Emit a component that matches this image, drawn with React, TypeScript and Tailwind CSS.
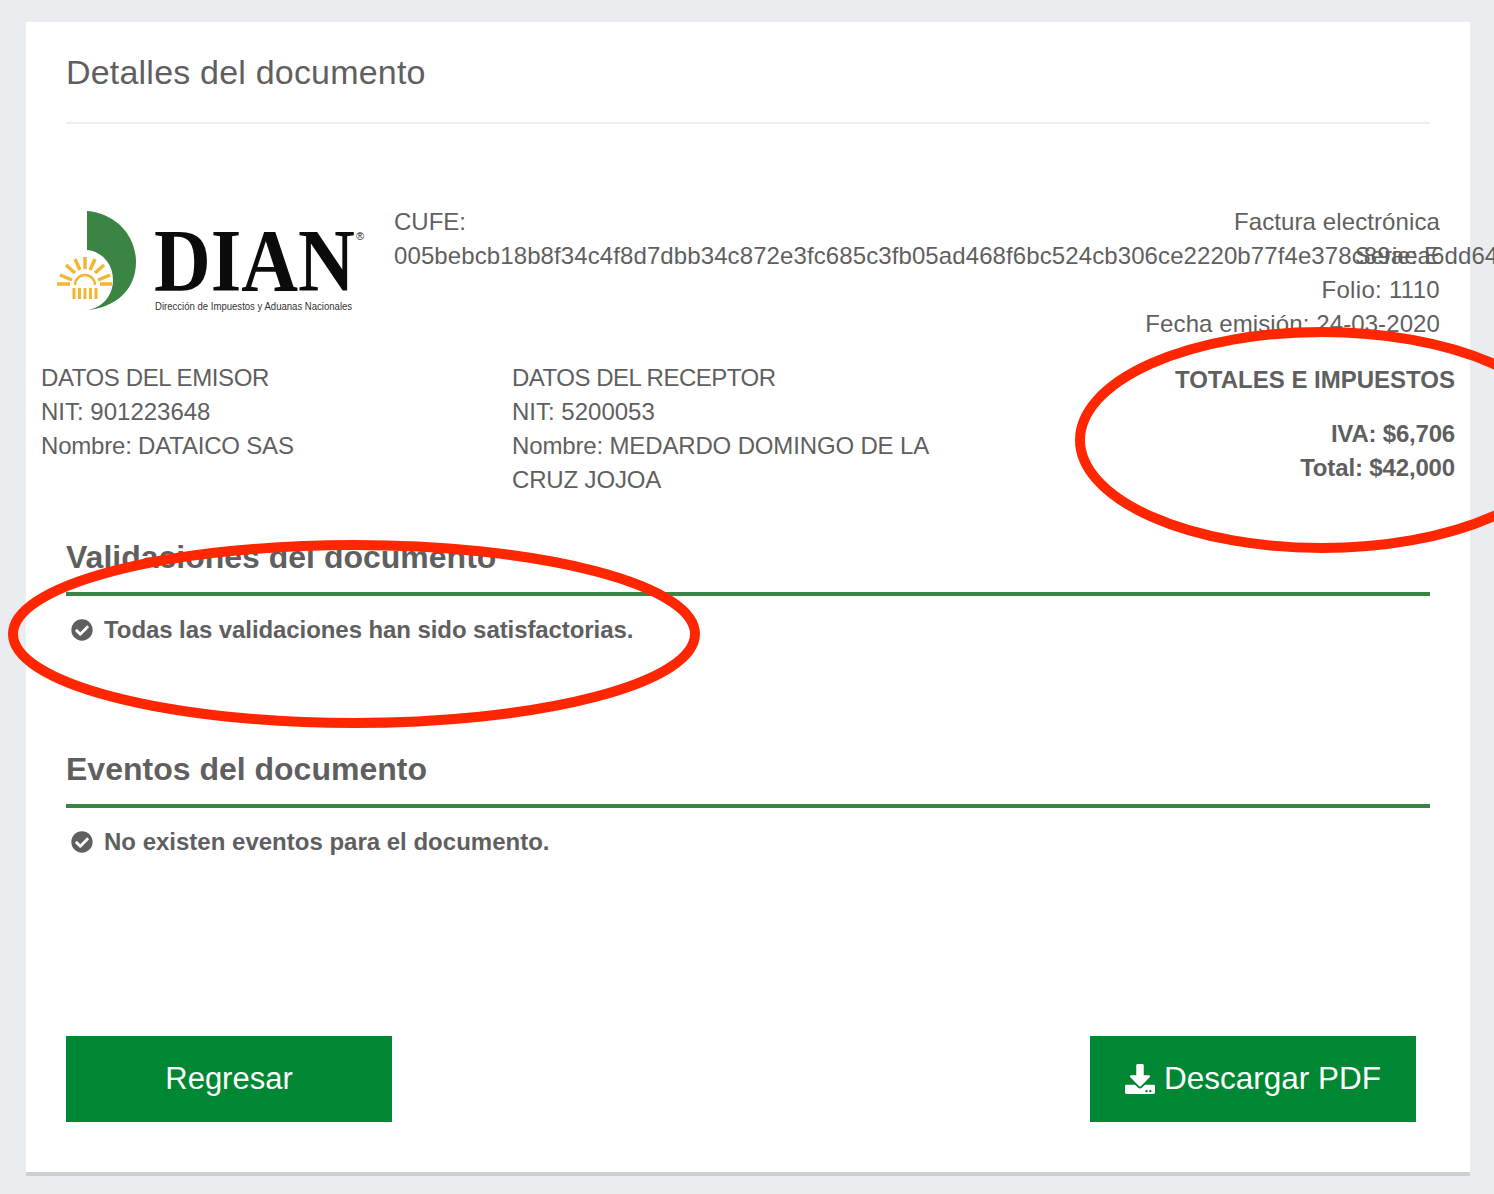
import React from 'react';
import { FaCheckCircle, FaDownload } from 'react-icons/fa';

function DianLogo() {
  return (
    <svg width="320" height="115" viewBox="50 205 320 115" className="shrink-0 -mt-[1px]">
      <path d="M87 211C115 213 136 235 136 262C136 290 115 308 87 310C103 308 113 295 113 280C113 262 100 251 87 250Z" fill="#3a8544" />
      <g stroke="#f2b632" strokeWidth="3.5" fill="none">
        <path d="M57 284H70M100 284H112" />
        <path d="M60 275L72 280M110 275L98 280M66 265L75 273M104 265L95 273M75 259L80 270M95 259L90 270M85 257V269" />
        <path d="M75 285A10 10 0 0 1 95 285" strokeWidth="2.5" />
        <path d="M74 288V299M79.500 288V299M85 288V299M90.500 288V299M96 288V299" strokeWidth="3" />
      </g>
      <text transform="translate(154 290) scale(0.883 1)" fontFamily="'Liberation Serif', serif" fontWeight="700" fontSize="89" fill="#0b0b0b">DIAN</text>
      <text transform="translate(155 310) scale(0.912 1)" fontFamily="'Liberation Sans', sans-serif" fontSize="10.5" fill="#333">Dirección de Impuestos y Aduanas Nacionales</text>
      <text x="356" y="240" fontFamily="'Liberation Sans', sans-serif" fontSize="11" fill="#222">®</text>
    </svg>
  );
}

function Section({ title, message, className }: { title: string; message: string; className?: string }) {
  return (
    <div>
      <h2 className="mx-10 text-[32px] leading-[44px] font-bold pb-[13px] border-b-4 border-[#3a8544]">{title}</h2>
      <p className={`mx-10 mt-[17px] pl-[5px] flex items-center gap-[11px] text-[24px] leading-[34px] font-bold ${className ?? ''}`}>
        <FaCheckCircle className="text-[22px] shrink-0" />
        {message}
      </p>
    </div>
  );
}

export default function App() {
  return (
    <div className="relative w-[1494px] h-[1194px] overflow-hidden bg-[#e9edf0] pt-[22px] pl-[26px] font-['Liberation_Sans',sans-serif] text-[#5f5f5f]">
      <div className="w-[1444px] h-[1154px] bg-white border-b-4 border-[#cdd0d3]">
        <div className="mx-10 pt-[28px] pb-[28px] border-b-2 border-[#eeeeee]">
          <h1 className="text-[34px] leading-[44px] tracking-[0.2px]">Detalles del documento</h1>
        </div>

        {/* Logo, CUFE, tipo de documento */}
        <div className="relative mt-[82px] h-[136px] flex text-[24px] leading-[34px] pl-[24px]">
          <DianLogo />
          <div className="ml-[24px] -mt-[1px]">
            <p>CUFE:</p>
            <p className="whitespace-nowrap tracking-[0.1px]">005bebcb18b8f34c4f8d7dbb34c872e3fc685c3fb05ad468f6bc524cb306ce2220b77f4e378c89aea6dd64</p>
          </div>
          <div className="absolute top-[-1px] right-[30px] text-right">
            <p className="tracking-[0.1px]">Factura electrónica</p>
            <p>Serie: E</p>
            <p className="tracking-[0.3px]">Folio: 1110</p>
            <p className="tracking-[0.1px]">Fecha emisión: 24-03-2020</p>
          </div>
        </div>

        {/* Emisor, receptor, totales */}
        <div className="mt-[19px] flex h-[174px] px-[15px] text-[24px] leading-[34px]">
          <div className="w-[471px]">
            <p className="tracking-[-0.4px]">DATOS DEL EMISOR</p>
            <p>NIT: 901223648</p>
            <p className="tracking-[-0.2px]">Nombre: DATAICO SAS</p>
          </div>
          <div className="w-[440px]">
            <p className="tracking-[-0.5px]">DATOS DEL RECEPTOR</p>
            <p>NIT: 5200053</p>
            <p className="tracking-[-0.15px]">Nombre: MEDARDO DOMINGO DE LA CRUZ JOJOA</p>
          </div>
          <div className="flex-1 pt-[2px] text-right font-bold">
            <p className="mb-[20px]">TOTALES E IMPUESTOS</p>
            <p className="tracking-[-0.2px]">IVA: $6,706</p>
            <p className="tracking-[-0.15px]">Total: $42,000</p>
          </div>
        </div>

        <div className="flex flex-col gap-[100px]">
          <Section title="Validaciones del documento" message="Todas las validaciones han sido satisfactorias." className="tracking-[-0.08px]" />
          <Section title="Eventos del documento" message="No existen eventos para el documento." />
        </div>

        <div className="mt-[177px] mx-10 pr-[14px] flex justify-between">
          <button className="w-[326px] h-[86px] bg-[#008733] text-white text-[31px]">Regresar</button>
          <button className="w-[326px] h-[86px] bg-[#008733] text-white text-[31.5px] flex items-center justify-center gap-[9px]">
            <FaDownload className="text-[30px]" />
            Descargar PDF
          </button>
        </div>
      </div>

      {/* Anotaciones rojas */}
      <svg className="absolute top-0 left-0 pointer-events-none" width="1494" height="1194" fill="none" stroke="#ff2600" strokeWidth="10">
        <ellipse cx="1322" cy="440" rx="242" ry="108" />
        <ellipse cx="354" cy="634" rx="341" ry="89" />
      </svg>
    </div>
  );
}
